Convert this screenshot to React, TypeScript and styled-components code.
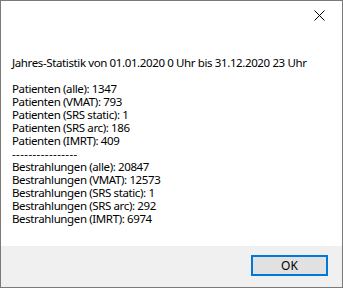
import React from 'react';
import styled, { createGlobalStyle } from 'styled-components';

const GlobalStyle = createGlobalStyle`
    html, body {
        margin: 0;
        padding: 0;
        background: #ffffff;
    }
`;

const Window = styled.div`
    box-sizing: border-box;
    width: 343px;
    height: 288px;
    border: 1px solid #7a7a7a;
    background: #ffffff;
    display: flex;
    flex-direction: column;
    font-family: 'Segoe UI', 'Noto Sans', 'Liberation Sans', sans-serif;
    font-size: 11.5px;
    letter-spacing: -0.38px;
    color: #000000;
`;

const TitleBar = styled.div`
    height: 30px;
    display: flex;
    justify-content: flex-end;
    align-items: flex-start;
`;

const CloseButton = styled.div`
    width: 46px;
    height: 29px;
    display: flex;
    align-items: center;
    justify-content: center;
`;

const Content = styled.div`
    flex: 1;
    padding: 25px 0 0 11px;
`;

const Line = styled.div`
    height: 13px;
    line-height: 13px;
    white-space: pre;
`;

const Dashes = styled(Line)`
    letter-spacing: 0.4px;
`;

const Footer = styled.div`
    height: 41px;
    background: #f0f0f0;
    display: flex;
    justify-content: flex-end;
    align-items: flex-start;
    padding: 9px 14px 0 0;
    box-sizing: border-box;
`;

const OkButton = styled.button`
    box-sizing: border-box;
    width: 77px;
    height: 21px;
    border: 2px solid #0078d7;
    background: #e1e1e1;
    font-family: inherit;
    font-size: 12px;
    color: #000000;
    padding: 0;
`;

const patienten = [
    'Patienten (alle): 1347',
    'Patienten (VMAT): 793',
    'Patienten (SRS static): 1',
    'Patienten (SRS arc): 186',
    'Patienten (IMRT): 409',
];

const bestrahlungen = [
    'Bestrahlungen (alle): 20847',
    'Bestrahlungen (VMAT): 12573',
    'Bestrahlungen (SRS static): 1',
    'Bestrahlungen (SRS arc): 292',
    'Bestrahlungen (IMRT): 6974',
];

export default function App() {
    return (
        <>
            <GlobalStyle />
            <Window>
                <TitleBar>
                    <CloseButton>
                        <svg width="11" height="11" viewBox="0 0 11 11">
                            <path d="M0.5 0.5 L10.5 10.5 M10.5 0.5 L0.5 10.5" stroke="#000" strokeWidth="1" />
                        </svg>
                    </CloseButton>
                </TitleBar>
                <Content>
                    <Line>Jahres-Statistik von 01.01.2020 0 Uhr bis 31.12.2020 23 Uhr</Line>
                    <Line />
                    {patienten.map((text) => (
                        <Line key={text}>{text}</Line>
                    ))}
                    <Dashes>----------------</Dashes>
                    {bestrahlungen.map((text) => (
                        <Line key={text}>{text}</Line>
                    ))}
                </Content>
                <Footer>
                    <OkButton>OK</OkButton>
                </Footer>
            </Window>
        </>
    );
}
